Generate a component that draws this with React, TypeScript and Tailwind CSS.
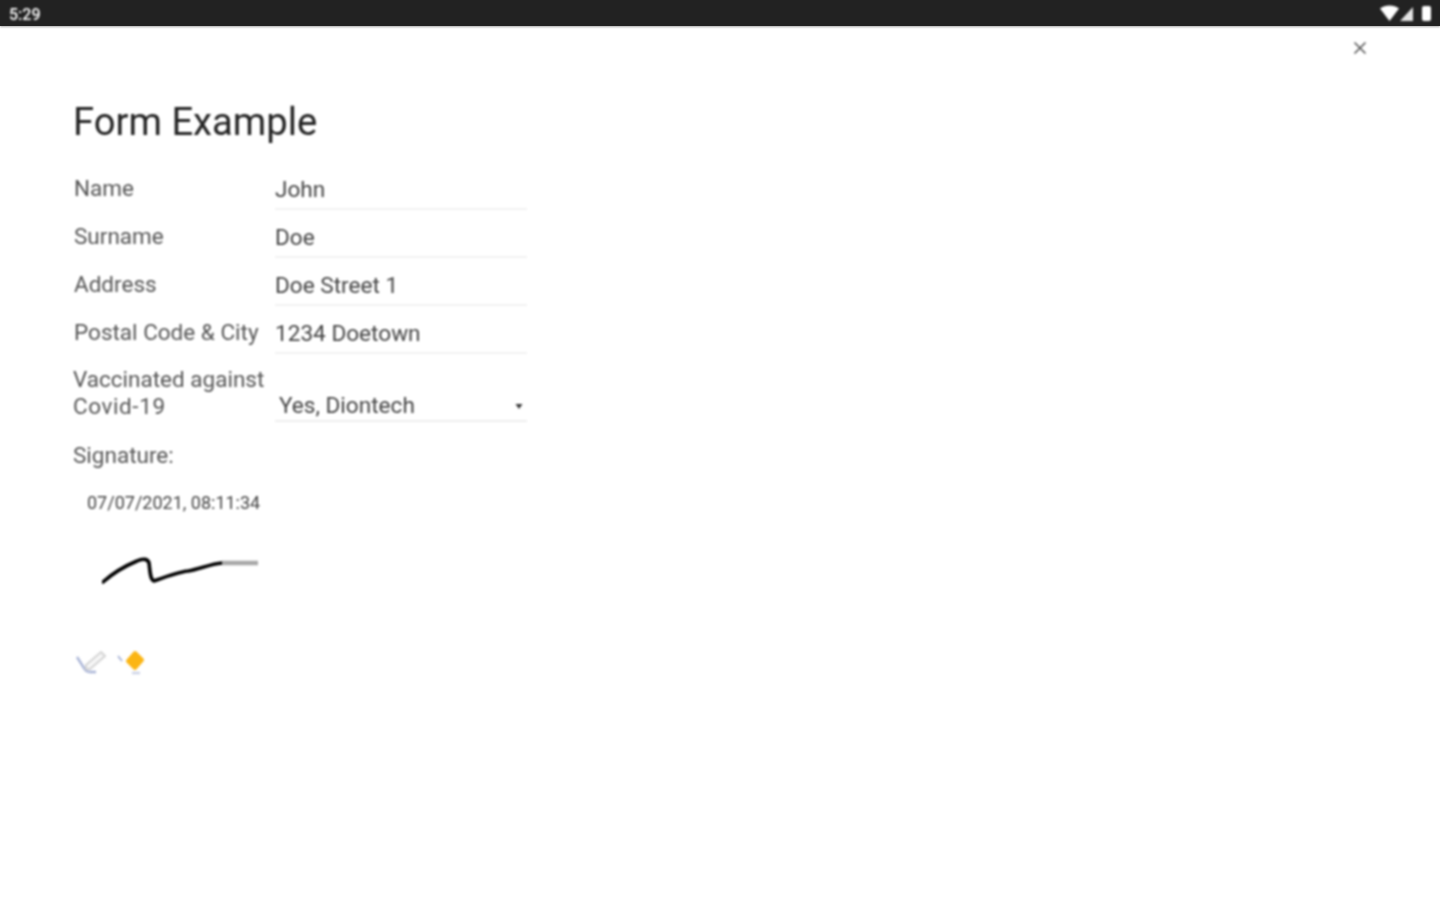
import React from "react";

const rows = [
  { label: "Name", value: "John" },
  { label: "Surname", value: "Doe" },
  { label: "Address", value: "Doe Street 1" },
  { label: "Postal Code & City", value: "1234 Doetown" },
];

export default function App() {
  return (
    <div className="relative w-[1440px] h-[900px] bg-white overflow-hidden font-['Roboto',sans-serif]">
      <div className="flex items-center justify-between h-[26px] bg-[#222222] pl-[9px] pr-[8px] shadow-[0_1px_2px_rgba(0,0,0,0.35)]">
        <span className="text-[16px] leading-[20px] pt-[4px] font-medium text-white blur-[0.8px]">5:29</span>
        <svg className="blur-[0.8px]" width="52" height="18" viewBox="0 0 52 18" aria-hidden="true">
          <path d="M0 4.5 C5 0.5 14 0.5 19 4.5 L9.5 17 Z" fill="#ffffff" />
          <path d="M33 3 V17 H20 Z" fill="#e4e4e4" />
          <rect x="42" y="2" width="9" height="15" rx="2" fill="#ffffff" />
        </svg>
      </div>

      <div className="blur-[0.8px]">
        <div className="flex justify-end pt-[15px] pr-[73px]">
          <svg width="14" height="14" viewBox="0 0 14 14" aria-hidden="true">
            <path d="M1.5 1.5 L12.5 12.5 M12.5 1.5 L1.5 12.5" stroke="#555555" strokeWidth="1.6" fill="none" />
          </svg>
        </div>

        <div className="pl-[73px] pt-[45px] w-[527px] box-content">
          <h1 className="text-[38.2px] leading-[44px] font-normal text-[#222222]">Form Example</h1>

          <div className="flex flex-col mt-[29px]">
            {rows.map((r) => (
              <div key={r.label} className="flex h-[48px] items-start">
                <div className="w-[202px] pl-px pt-[2px] text-[22.5px] leading-[26px] text-[#555555] whitespace-nowrap">
                  {r.label}
                </div>
                <div className="w-[252px] h-[37px] pt-[4px] border-b-2 border-[#f2f2f2] text-[22.6px] leading-[26px] text-[#444444] whitespace-nowrap">
                  {r.value}
                </div>
              </div>
            ))}

            <div className="flex h-[68px] items-start">
              <div className="w-[202px] pt-px text-[22.5px] leading-[27px] text-[#555555] whitespace-nowrap">
                Vaccinated against
                <br />
                <span className="tracking-[0.6px]">Covid-19</span>
              </div>
              <div className="flex items-center justify-between w-[252px] h-[57px] pt-[26px] pl-[4px] pr-[4px] border-b-2 border-[#eeeeee] text-[22.6px] leading-[26px] text-[#444444]">
                <span>Yes, Diontech</span>
                <svg width="8" height="8" viewBox="0 0 8 8" aria-hidden="true">
                  <path d="M0.5 2 H7.5 L4 7 Z" fill="#333333" />
                </svg>
              </div>
            </div>

            <div className="text-[22.5px] leading-[26px] text-[#555555] mt-[9px]">Signature:</div>
            <div className="pl-[14px] mt-[24px] text-[18px] leading-[22px] text-[#444444]">07/07/2021, 08:11:34</div>

            <svg className="mt-[42px] ml-[29px]" width="160" height="36" viewBox="102 556 160 36" aria-hidden="true">
              <path
                d="M103 582 C112 574 125 566 137 561 C143 558 148 559 149 563 C150 570 150 580 154 581 C165 577 178 572 188 571 C200 569 210 564 222 563"
                stroke="#000000"
                strokeWidth="3.6"
                fill="none"
                strokeLinejoin="round"
                strokeLinecap="round"
              />
              <path d="M222 563 H258" stroke="#a8a8a8" strokeWidth="4.5" fill="none" />
            </svg>

            <div className="flex items-center gap-[11px] mt-[57px] ml-[3px]">
              <svg width="30" height="26" viewBox="0 0 30 26" aria-hidden="true">
                <path d="M1 8 L8 19 Q10 23 14 23 H20" stroke="#a9b4d6" strokeWidth="2.4" fill="none" />
                <path d="M10 16 L25 3 L29 7 L14 20 L10 20 Z" stroke="#d4d4d4" strokeWidth="2" fill="#f7f7f7" />
              </svg>
              <svg width="28" height="26" viewBox="0 0 28 26" aria-hidden="true">
                <path d="M1 7 L5 12" stroke="#a9b4d6" strokeWidth="2" fill="none" />
                <path d="M18 4 L25 11 L18 19 L11 12 Z" fill="#fbb514" stroke="#fbb514" strokeWidth="4" strokeLinejoin="round" />
                <path d="M15 24 H23" stroke="#ccd3e6" strokeWidth="2.5" fill="none" />
              </svg>
            </div>
          </div>
        </div>
      </div>
    </div>
  );
}
